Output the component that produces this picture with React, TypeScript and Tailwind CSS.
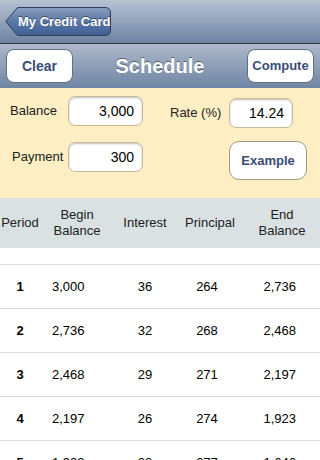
const rows = [
  ['1', '3,000', '36', '264', '2,736'],
  ['2', '2,736', '32', '268', '2,468'],
  ['3', '2,468', '29', '271', '2,197'],
  ['4', '2,197', '26', '274', '1,923'],
  ['5', '1,923', '23', '277', '1,646'],
  ['6', '1,646', '20', '280', '1,366'],
];

const cols = 'grid grid-cols-[40px_74px_62px_68px_76px]';

const Field = ({ value, className }: { value: string; className: string }) => (
  <div
    className={`${className} bg-white rounded-[7px] border border-[#c9bb98] shadow-[inset_0_1px_2px_rgba(0,0,0,0.25)] flex items-center justify-end pr-[8px] text-[14px] text-black`}
  >
    {value}
  </div>
);

export default function App() {
  return (
    <div className="w-[320px] h-[460px] overflow-hidden bg-white font-['Liberation_Sans',Arial,sans-serif]">
      {/* Nav bar */}
      <div className="h-[44px] bg-gradient-to-b from-[#b7c2d2] to-[#6e84a3] border-b border-[#2d3642] flex items-center pl-[5px]">
        <button className="relative h-[29px] w-[106px] flex items-center pl-[13px]">
          <svg className="absolute inset-0" width="106" height="29" viewBox="0 0 106 29">
            <defs>
              <linearGradient id="bk" x1="0" y1="0" x2="0" y2="1">
                <stop offset="0" stopColor="#8aa0c2" />
                <stop offset="0.5" stopColor="#5a77a5" />
                <stop offset="1" stopColor="#3f6096" />
              </linearGradient>
            </defs>
            <path
              d="M0.8 14.5 L12 1 Q12.8 0.5 14 0.5 L100 0.5 Q105.5 0.5 105.5 6 L105.5 23 Q105.5 28.5 100 28.5 L14 28.5 Q12.8 28.5 12 28 Z"
              fill="url(#bk)"
              stroke="#2f3d55"
              strokeWidth="1"
            />
          </svg>
          <span className="relative text-white font-bold text-[13px] [text-shadow:0_-1px_0_rgba(0,0,0,0.45)]">
            My Credit Card
          </span>
        </button>
      </div>

      {/* Toolbar */}
      <div className="h-[44px] bg-gradient-to-b from-[#aeb9ca] to-[#6f85a3] flex items-center justify-between px-[6px]">
        <button className="w-[67px] h-[34px] bg-white rounded-[8px] border border-[#5e6f88] text-[14px] font-bold text-[#3a4d77]">
          Clear
        </button>
        <span className="text-white font-bold text-[20px] [text-shadow:0_-1px_0_rgba(0,0,0,0.45)]">Schedule</span>
        <button className="w-[67px] h-[34px] bg-white rounded-[8px] border border-[#5e6f88] text-[13px] font-bold text-[#3a4d77]">
          Compute
        </button>
      </div>

      {/* Inputs */}
      <div className="h-[110px] bg-[#fdefc3] flex">
        <div className="w-[160px] flex flex-col pt-[8px] gap-[16px]">
          <div className="flex items-center">
            <span className="w-[68px] pl-[10px] text-[13px] text-[#222]">Balance</span>
            <Field value="3,000" className="w-[75px] h-[30px]" />
          </div>
          <div className="flex items-center">
            <span className="w-[68px] pl-[12px] text-[13px] text-[#222]">Payment</span>
            <Field value="300" className="w-[75px] h-[30px]" />
          </div>
        </div>
        <div className="flex flex-col pt-[10px] gap-[13px]">
          <div className="flex items-center">
            <span className="w-[69px] pl-[10px] text-[13px] text-[#222]">Rate (%)</span>
            <Field value="14.24" className="w-[64px] h-[30px]" />
          </div>
          <div className="pl-[69px]">
            <button className="w-[78px] h-[39px] bg-white rounded-[10px] border border-[#a69a80] text-[13px] font-bold text-[#3a4d77]">
              Example
            </button>
          </div>
        </div>
      </div>

      {/* Table header */}
      <div className={`${cols} h-[50px] bg-[#d9e1e3] items-center text-[13px] text-[#222] leading-[16px] text-center`}>
        <span>Period</span>
        <span>
          Begin
          <br />
          Balance
        </span>
        <span>Interest</span>
        <span>Principal</span>
        <span>
          End
          <br />
          Balance
        </span>
      </div>

      <div className="h-[17px] border-b border-[#dcdcdc]" />

      {rows.map((r) => (
        <div key={r[0]} className={`${cols} h-[44px] border-b border-[#dcdcdc] items-center text-[13px] text-black`}>
          <span className="text-center font-bold">{r[0]}</span>
          <span className="pl-[12px]">{r[1]}</span>
          <span className="text-center">{r[2]}</span>
          <span className="text-center pr-[6px]">{r[3]}</span>
          <span className="text-right pr-[24px]">{r[4]}</span>
        </div>
      ))}
    </div>
  );
}
